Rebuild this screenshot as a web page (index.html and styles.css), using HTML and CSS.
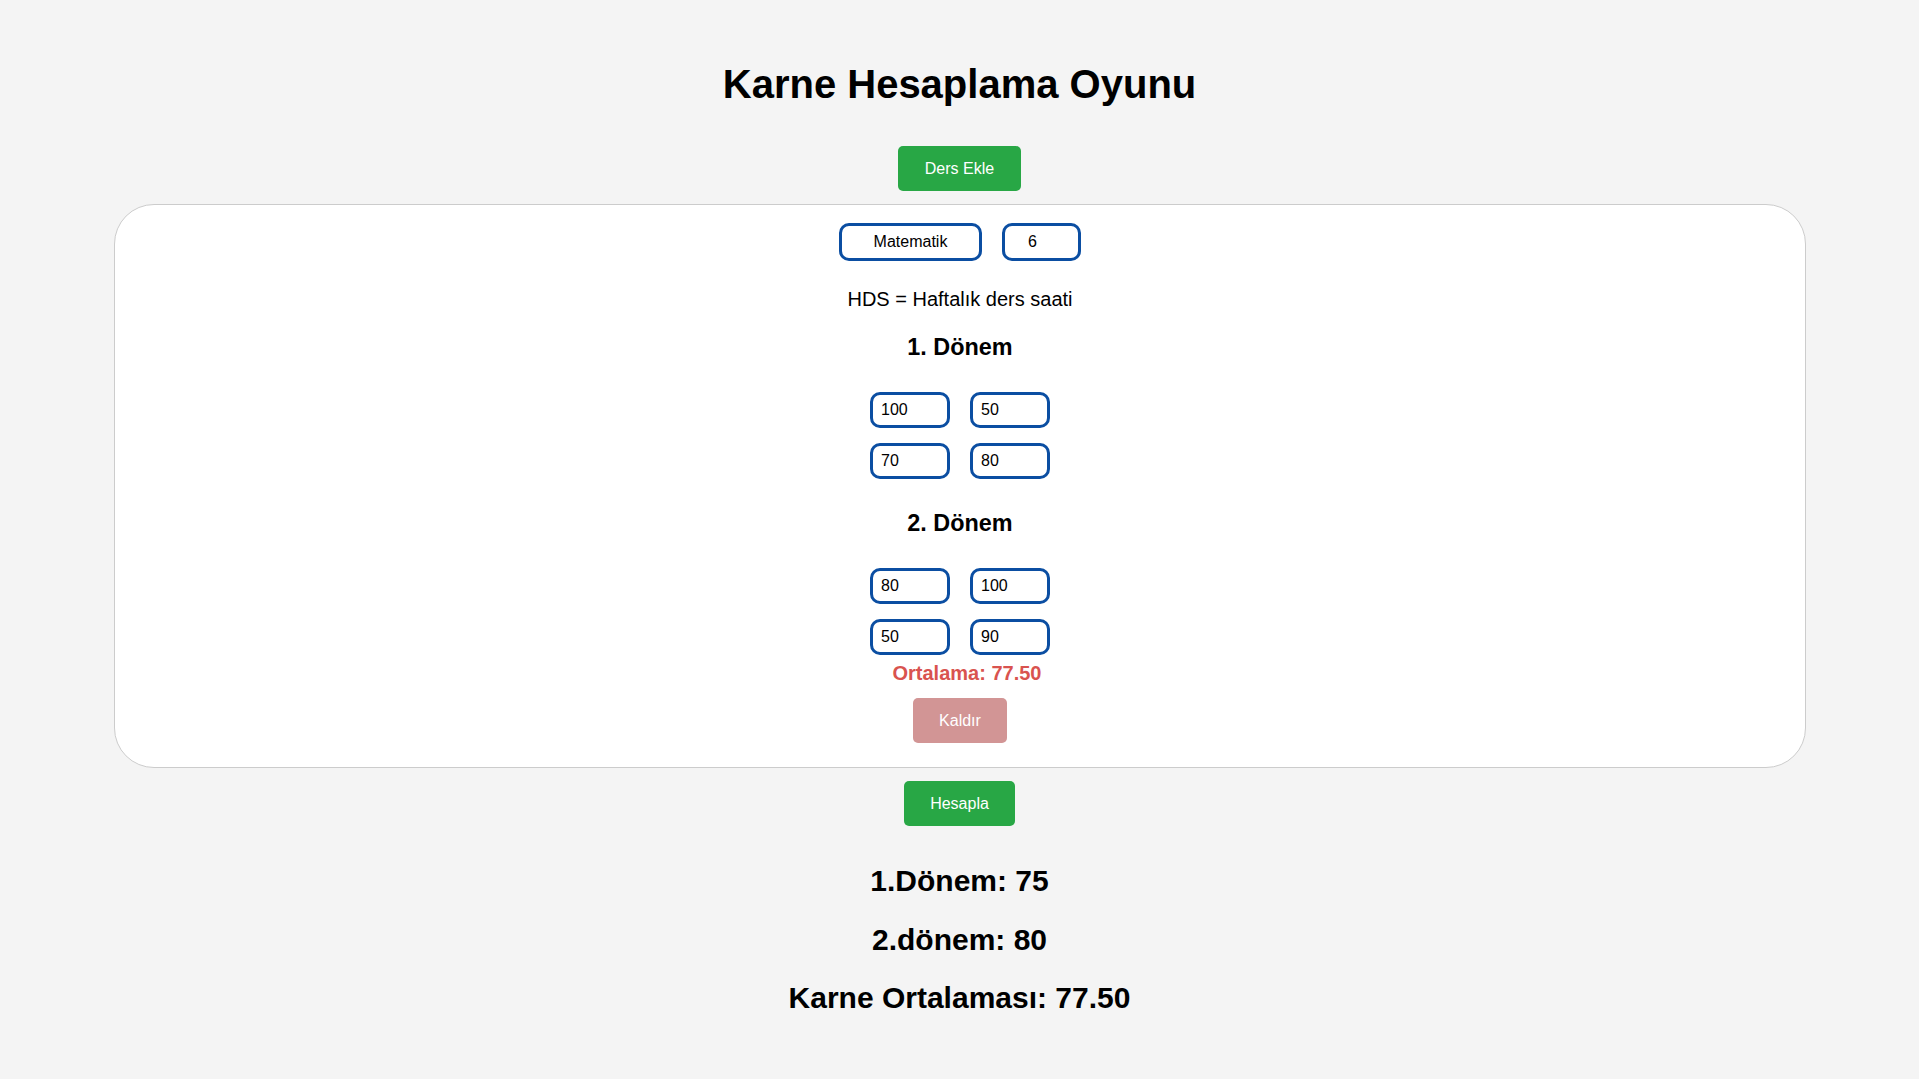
FILE: index.html
```html
<!DOCTYPE html>
<html lang="tr">
<head>
<meta charset="utf-8">
<title>Karne Hesaplama Oyunu</title>
<link rel="stylesheet" href="styles.css">
</head>
<body>
  <h1 class="title">Karne Hesaplama Oyunu</h1>
  <div class="actions">
    <button class="btn btn-green">Ders Ekle</button>
  </div>

  <section class="card">
    <div class="course-row">
      <input class="field field-name" type="text" value="Matematik">
      <input class="field field-hours" type="text" value="6">
    </div>
    <p class="note">HDS = Haftalık ders saati</p>

    <h3 class="term">1. Dönem</h3>
    <div class="grades">
      <input class="field grade" type="text" value="100">
      <input class="field grade" type="text" value="50">
      <input class="field grade" type="text" value="70">
      <input class="field grade" type="text" value="80">
    </div>

    <h3 class="term term-second">2. Dönem</h3>
    <div class="grades">
      <input class="field grade" type="text" value="80">
      <input class="field grade" type="text" value="100">
      <input class="field grade" type="text" value="50">
      <input class="field grade" type="text" value="90">
    </div>

    <p class="avg">Ortalama: 77.50</p>
    <div class="remove-wrap">
      <button class="btn btn-remove">Kaldır</button>
    </div>
  </section>

  <div class="actions actions-calc">
    <button class="btn btn-green">Hesapla</button>
  </div>

  <div class="results">
    <h2 class="result">1.Dönem: 75</h2>
    <h2 class="result">2.dönem: 80</h2>
    <h2 class="result">Karne Ortalaması: 77.50</h2>
  </div>
</body>
</html>
```

FILE: styles.css
```css
html, body {
  margin: 0;
  padding: 0;
}

body {
  background: #f4f4f4;
  font-family: "Liberation Sans", Arial, sans-serif;
  font-size: 20px;
  color: #000;
  text-align: center;
  padding-top: 61px;
}

.title {
  margin: 0;
  font-size: 40px;
  font-weight: bold;
  line-height: 46px;
}

.actions {
  display: flex;
  justify-content: center;
  margin-top: 39px;
}

.actions-calc {
  margin-top: 13px;
}

.btn {
  font-family: "Liberation Sans", Arial, sans-serif;
  font-size: 16px;
  color: #fff;
  border: none;
  border-radius: 5px;
  height: 45px;
  line-height: 45px;
  padding: 0 26.5px;
  cursor: pointer;
}

.btn-green {
  background: #28a745;
}

.btn-remove {
  background: #d29595;
}

.card {
  margin: 13px 113px 0 114px;
  background: #fff;
  border: 1px solid #cccccc;
  border-radius: 40px;
  padding: 18px 0 24px;
}

.course-row {
  display: flex;
  justify-content: center;
  gap: 20px;
}

.field {
  box-sizing: border-box;
  font-family: "Liberation Sans", Arial, sans-serif;
  font-size: 16px;
  color: #000;
  background: #fff;
  border: 3px solid #0b4ea2;
  border-radius: 10px;
  outline: none;
  margin: 0;
}

.field-name {
  width: 143px;
  height: 38px;
  text-align: center;
}

.field-hours {
  width: 79px;
  height: 38px;
  padding: 0 18px 0 0;
  text-align: center;
}

.note {
  margin: 27px 0 0;
  font-size: 20px;
  line-height: 23px;
}

.term {
  margin: 23.4px 0 0;
  font-size: 23.4px;
  font-weight: bold;
  line-height: 27px;
}

.term-second {
  margin-top: 31.4px;
}

.grades {
  display: grid;
  grid-template-columns: 80px 80px;
  column-gap: 20px;
  row-gap: 15px;
  justify-content: center;
  margin-top: 30.6px;
}

.grade {
  width: 80px;
  height: 36px;
  padding: 0 8px;
  text-align: left;
}

.avg {
  margin: 6.6px 0 0;
  padding-left: 14px;
  font-size: 20px;
  font-weight: bold;
  line-height: 23px;
  color: #d9534f;
}

.remove-wrap {
  display: flex;
  justify-content: center;
  margin-top: 13.4px;
}

.results {
  padding-top: 14px;
}

.result {
  margin: 24.5px 0;
  font-size: 30px;
  font-weight: bold;
  line-height: 34px;
}
```
